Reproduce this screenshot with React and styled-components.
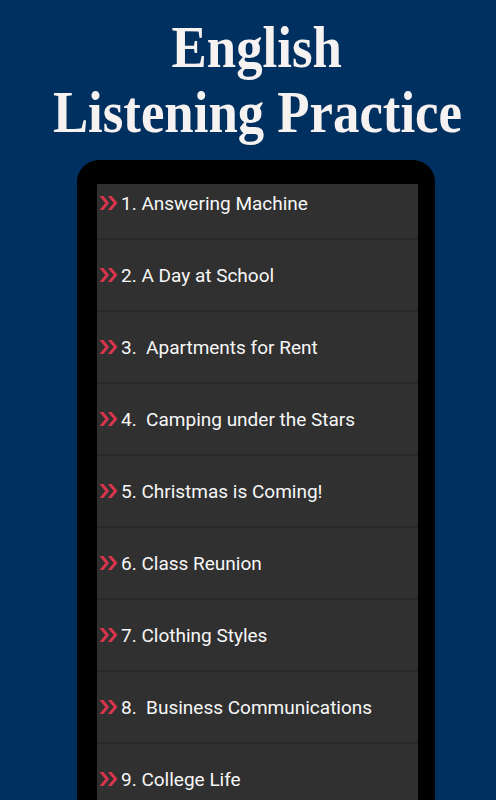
import React from "react";
import styled, { createGlobalStyle } from "styled-components";

const GlobalStyle = createGlobalStyle`
  html, body {
    margin: 0;
    padding: 0;
    background: #00305f;
  }
  body {
    font-family: Roboto, "Liberation Sans", sans-serif;
  }
`;

const Page = styled.div`
  width: 496px;
  height: 800px;
  overflow: hidden;
  background: #00305f;
  display: flex;
  flex-direction: column;
`;

const Header = styled.div`
  height: 160px;
  flex-shrink: 0;
  padding-left: 18px;
  box-sizing: border-box;
  display: flex;
  flex-direction: column;
  align-items: center;
  justify-content: center;
`;

const TitleLine = styled.div`
  font-family: "Liberation Serif", "DejaVu Serif", serif;
  font-weight: bold;
  font-size: 60px;
  line-height: 65px;
  color: #f6f2f2;
  white-space: nowrap;
  transform: scaleX(0.88);
`;

const Phone = styled.div`
  width: 358px;
  margin-left: 77px;
  flex: 1;
  min-height: 0;
  background: #000;
  border-radius: 22px 22px 0 0;
  padding: 24px 17px 0 20px;
  box-sizing: border-box;
  display: flex;
`;

const Screen = styled.div`
  flex: 1;
  background: #303030;
  overflow: hidden;
`;

const List = styled.div`
  margin-top: -16px;
  display: flex;
  flex-direction: column;
`;

const Row = styled.div`
  height: 72px;
  flex-shrink: 0;
  box-sizing: border-box;
  display: flex;
  align-items: center;
  padding-left: 2px;
  border-bottom: 2px solid #282828;
  color: #f7f7f7;
  font-size: 19px;
  white-space: pre;
`;

const Chevron = styled.svg`
  display: block;
  width: 19px;
  height: 14px;
  min-width: 19px;
  margin-right: 3px;
  margin-top: -1px;
`;

const Arrows = () => (
  <Chevron viewBox="0 0 19 14">
    <path d="M0.5 0 H4.4 L10.2 7 L4.4 14 H0.5 L6.3 7 Z" fill="#d6354c" />
    <path d="M8.8 0 H12.7 L18.5 7 L12.7 14 H8.8 L14.6 7 Z" fill="#d6354c" />
  </Chevron>
);

const lessons = [
  "1. Answering Machine",
  "2. A Day at School",
  "3.  Apartments for Rent",
  "4.  Camping under the Stars",
  "5. Christmas is Coming!",
  "6. Class Reunion",
  "7. Clothing Styles",
  "8.  Business Communications",
  "9. College Life",
];

export default function App() {
  return (
    <>
      <GlobalStyle />
      <Page>
        <Header>
          <TitleLine>English</TitleLine>
          <TitleLine>Listening Practice</TitleLine>
        </Header>
        <Phone>
          <Screen>
            <List>
              {lessons.map((t) => (
                <Row key={t}>
                  <Arrows />
                  {t}
                </Row>
              ))}
            </List>
          </Screen>
        </Phone>
      </Page>
    </>
  );
}
